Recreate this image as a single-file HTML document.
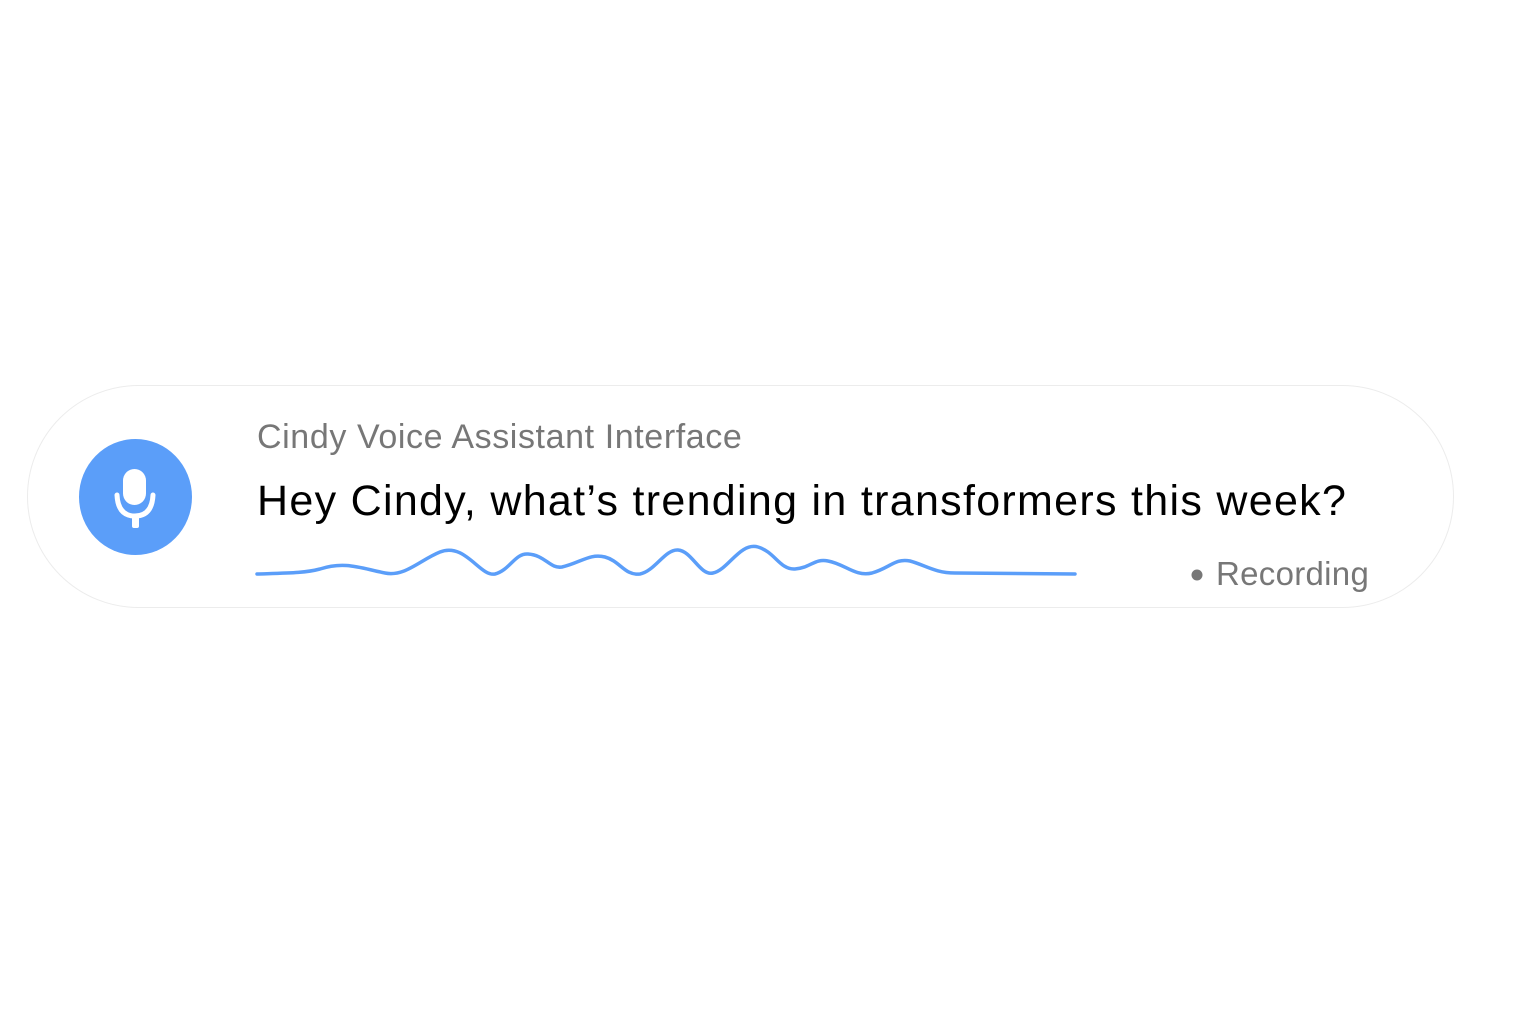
<!DOCTYPE html>
<html><head><meta charset="utf-8"><style>
html,body{margin:0;padding:0;background:#fff;width:1536px;height:1024px;overflow:hidden;font-family:"Liberation Sans",sans-serif}
.pill{position:absolute;left:27px;top:385px;width:1427px;height:223px;border:1.5px solid #ececec;border-radius:112px;background:#fff;box-sizing:border-box}
.t1{position:absolute;left:257px;top:418px;font-size:34px;color:#777;white-space:nowrap;letter-spacing:0.6px}
.t2{position:absolute;left:257px;top:477px;font-size:43px;color:#000;white-space:nowrap;letter-spacing:1.3px}
.rec{position:absolute;top:555px;font-size:33px;color:#777;white-space:nowrap;letter-spacing:0.3px}
</style></head><body>
<div class="pill"></div>
<svg width="1536" height="1024" style="position:absolute;left:0;top:0">
<ellipse cx="135.5" cy="497" rx="56.5" ry="58" fill="#5b9ef9"/>
<rect x="123" y="469" width="23" height="36" rx="11.5" fill="#fff"/>
<path d="M117 495 Q118 516 135 516 Q152 516 153 495" fill="none" stroke="#fff" stroke-width="5" stroke-linecap="round"/>
<rect x="132" y="514" width="7" height="14" rx="2" fill="#fff"/>
<path d="M257 574 C290 573 305 573 320 569 C345 561 360 568 385 573 C405 577 420 560 440 552 C465 542 480 577 495 574 C510 570 515 553 528 554 C545 555 550 569 562 567 C580 563 590 553 605 557 C620 561 625 576 640 574 C655 571 665 549 678 550 C692 551 700 576 713 573 C728 570 740 542 758 547 C775 552 780 570 795 569 C810 568 815 558 828 561 C845 564 855 577 872 573 C890 568 895 558 910 561 C925 565 935 573 955 573 L1075 574" fill="none" stroke="#5b9ef9" stroke-width="3.5" stroke-linecap="round"/>
<circle cx="1197" cy="575" r="5.5" fill="#777"/>
</svg>
<div class="t1">Cindy Voice Assistant Interface</div>
<div class="t2">Hey Cindy, what’s trending in transformers this week?</div>
<div class="rec" style="left:1216px">Recording</div>
</body></html>
